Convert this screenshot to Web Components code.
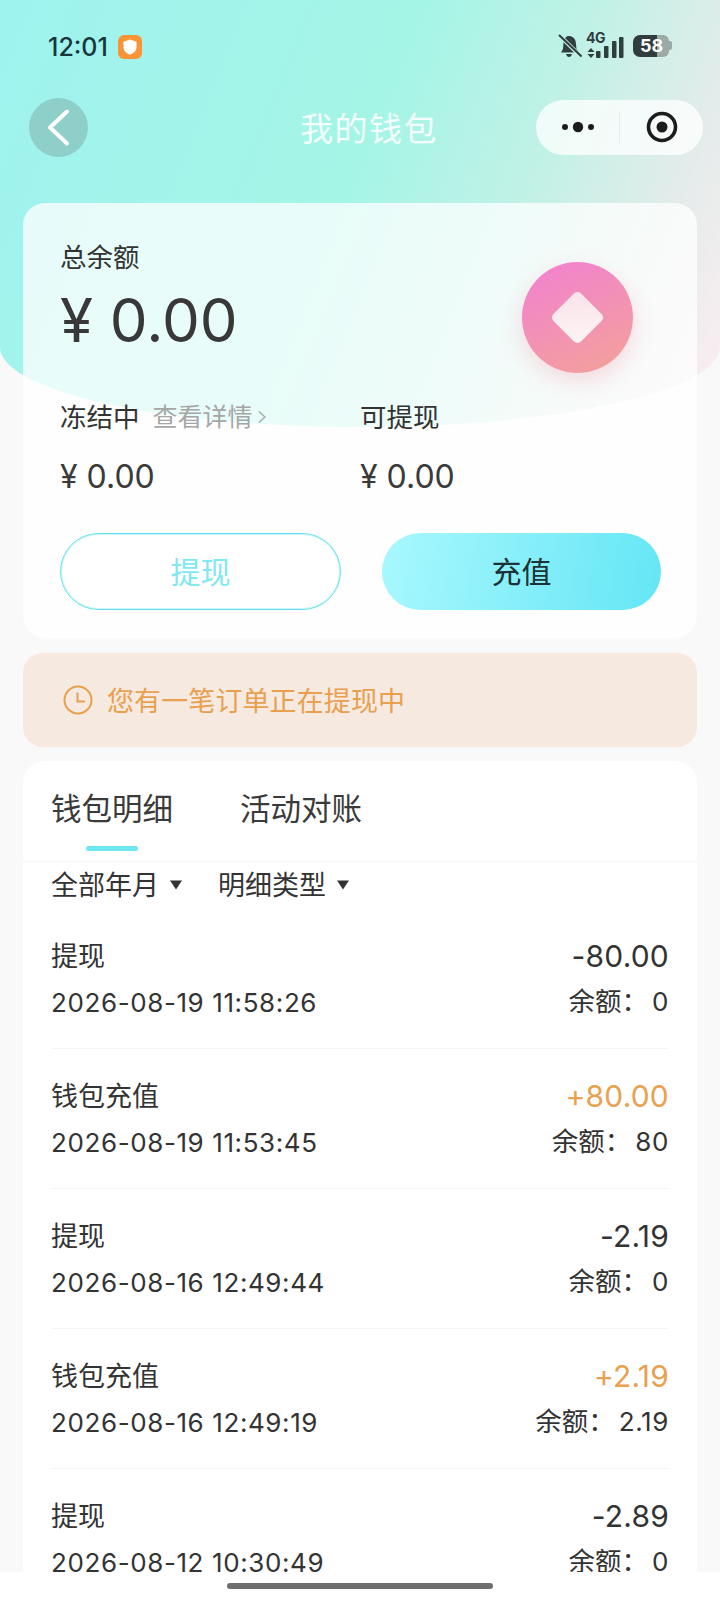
<!DOCTYPE html>
<html lang="zh">
<head>
<meta charset="utf-8">
<title>我的钱包</title>
<style>
  html, body { margin: 0; padding: 0; height: 1600px; overflow: hidden; background: #f9f9f9; }
  body { font-family: Inter, "Noto Sans CJK SC", sans-serif; color: #333; }
</style>
</head>
<body>
<wallet-page>
  <status-bar></status-bar>
  <nav-bar title-text="我的钱包"></nav-bar>
  <balance-card></balance-card>
  <notice-bar>您有一笔订单正在提现中</notice-bar>
  <ledger-panel>
    <ledger-row kind="提现" date="2026-08-19 11:58:26" amount="-80.00" rest="0"></ledger-row>
    <ledger-row kind="钱包充值" date="2026-08-19 11:53:45" amount="+80.00" rest="80"></ledger-row>
    <ledger-row kind="提现" date="2026-08-16 12:49:44" amount="-2.19" rest="0"></ledger-row>
    <ledger-row kind="钱包充值" date="2026-08-16 12:49:19" amount="+2.19" rest="2.19"></ledger-row>
    <ledger-row kind="提现" date="2026-08-12 10:30:49" amount="-2.89" rest="0"></ledger-row>
  </ledger-panel>
</wallet-page>

<script>
// Contenedor de la pagina: fondo degradado, contenido y barra inferior
class WalletPage extends HTMLElement {
  constructor() {
    super();
    this.attachShadow({ mode: 'open' });
  }
  connectedCallback() {
    this.shadowRoot.innerHTML = `
      <style>
        :host { display: flex; flex-direction: column; width: 720px; height: 1600px; position: relative; overflow: hidden; }
        .band {
          position: absolute; left: 0; top: 0; width: 720px; height: 427px;
          border-radius: 0 0 50% 50% / 0 0 80px 80px;
          background: linear-gradient(112deg, #9ff3ef 0%, #a5f5e6 48%, #c2f1e6 68%, #e2ecea 84%, #feedf2 100%);
        }
        .content { position: relative; flex: 1; min-height: 0; overflow: hidden; }
        .home { height: 28px; background: #fff; display: flex; justify-content: center; padding-top: 11px; box-sizing: border-box; position: relative; }
        .home i { display: block; width: 266px; height: 6px; border-radius: 3px; background: #6e6e6e; }
      </style>
      <div class="band"></div>
      <div class="content"><slot></slot></div>
      <div class="home"><i></i></div>`;
  }
}
customElements.define('wallet-page', WalletPage);

// Barra de estado del telefono
class StatusBar extends HTMLElement {
  constructor() {
    super();
    this.attachShadow({ mode: 'open' });
  }
  connectedCallback() {
    this.shadowRoot.innerHTML = `
      <style>
        :host { display: flex; align-items: center; justify-content: space-between; height: 92px; padding: 0 47px 0 48px; box-sizing: border-box; color: #17373c; }
        .left, .right { display: flex; align-items: center; }
        .left { margin-top: 1px; }
        .time { font: 500 25px/30px Inter, sans-serif; width: 70px; }
        .right { margin-top: -1px; }
        svg { display: block; }
        .net { position: relative; width: 38px; height: 24px; margin-left: 4px; }
        .net b { position: absolute; left: 0; top: -4px; font: 700 14px/16px Inter, sans-serif; letter-spacing: -.5px; color: #2c3e40; }
        .net svg { position: absolute; left: 0; top: 0; }
        .batt { position: relative; display: flex; width: 40px; height: 22px; margin-left: 9px; }
        .batt .a { width: 24px; background: #303d3c; border-radius: 7px 0 0 7px; }
        .batt .b { width: 12px; background: #9aaaa6; border-radius: 0 6px 6px 0; }
        .batt .c { width: 3px; height: 9px; margin-top: 6px; background: #9aaaa6; border-radius: 0 2px 2px 0; }
        .batt span { position: absolute; left: 0; width: 37px; top: 0; text-align: center; font: 700 18px/22px Inter, sans-serif; color: #fff; }
      </style>
      <div class="left">
        <span class="time">12:01</span>
        <svg width="24" height="24" viewBox="0 0 24 24">
          <rect width="24" height="24" rx="6" fill="#fb9436"/>
          <path d="M12 4.500l6.500 2.200v5.600c0 3.800-3 6-6.500 7.400-3.500-1.400-6.500-3.600-6.500-7.400V6.700z" fill="#fff"/>
        </svg>
      </div>
      <div class="right">
        <svg width="24" height="25" viewBox="0 0 24 25" fill="#2f3f40">
          <path d="M11 3c4 0 6.500 3 6.800 6.500l.7 6.500 2.500 3.500H3l2-3.500.6-7.500C6 5.500 8 3 11 3z"/>
          <path d="M8 21h6c-.5 2-1.500 3-3 3s-2.500-1-3-3z"/>
          <path d="M1.500 2.500l21.500 21" stroke="#c6efe7" stroke-width="4"/>
          <path d="M1 2l22.500 21.500" stroke="#2f3f40" stroke-width="2"/>
        </svg>
        <div class="net">
          <b>4G</b>
          <svg width="38" height="24" viewBox="0 0 38 24" fill="#2f3f40">
            <path d="M5 14l3.500 4h-7zM5 24l-3.500-4h7z"/>
            <rect x="10" y="17" width="4.500" height="7" rx="1"/>
            <rect x="18" y="12" width="4.500" height="12" rx="1"/>
            <rect x="26" y="7" width="4.500" height="17" rx="1"/>
            <rect x="33" y="3" width="4.500" height="21" rx="1"/>
          </svg>
        </div>
        <div class="batt"><i class="a"></i><i class="b"></i><i class="c"></i><span>58</span></div>
      </div>`;
  }
}
customElements.define('status-bar', StatusBar);

// Barra de navegacion con boton atras, titulo y capsula
class NavBar extends HTMLElement {
  constructor() {
    super();
    this.attachShadow({ mode: 'open' });
  }
  connectedCallback() {
    this.shadowRoot.innerHTML = `
      <style>
        :host { display: flex; align-items: center; justify-content: space-between; height: 70px; padding: 0 17px 0 29px; box-sizing: border-box; position: relative; }
        .back { width: 59px; height: 59px; border-radius: 50%; background: #8fcfc9; display: flex; align-items: center; justify-content: center; }
        h1 { position: absolute; left: 18px; right: 0; top: 0; margin: 0; text-align: center; font: 400 33px/70px "Noto Sans CJK SC", sans-serif; letter-spacing: 1.500px; color: rgba(255,255,255,.9); }
        .capsule { position: relative; width: 167px; height: 55px; border-radius: 28px; background: rgba(255,255,255,.76); display: flex; align-items: center; }
        .capsule > div { flex: 1; display: flex; justify-content: center; align-items: center; }
        .capsule .sep { flex: none; width: 1px; height: 31px; background: rgba(0,0,0,.06); }
      </style>
      <div class="back">
        <svg width="59" height="59" viewBox="0 0 59 59" fill="none"><path d="M38 13.500L21 29.500L38 45.500" stroke="#fff" stroke-width="4" stroke-linecap="round" stroke-linejoin="round"/></svg>
      </div>
      <h1>${this.getAttribute('title-text')}</h1>
      <div class="capsule">
        <div>
          <svg width="34" height="12" viewBox="0 0 34 12" fill="#1c1c1c"><circle cx="4" cy="6" r="3"/><circle cx="17" cy="6" r="5.200"/><circle cx="30" cy="6" r="3"/></svg>
        </div>
        <i class="sep"></i>
        <div>
          <svg width="32" height="32" viewBox="0 0 32 32" fill="none"><circle cx="16" cy="16" r="13.500" stroke="#1c1c1c" stroke-width="3.600"/><circle cx="16" cy="16" r="5.500" fill="#1c1c1c"/></svg>
        </div>
      </div>`;
  }
}
customElements.define('nav-bar', NavBar);

// Tarjeta principal con los saldos y los botones
class BalanceCard extends HTMLElement {
  constructor() {
    super();
    this.attachShadow({ mode: 'open' });
  }
  connectedCallback() {
    this.shadowRoot.innerHTML = `
      <style>
        :host { display: block; margin: 41px 23px 0 23px; height: 435px; box-sizing: border-box; padding: 35px 36px 0 37px; border-radius: 22px; background: rgba(255,255,255,.75); font-family: Inter, "Noto Sans CJK SC", sans-serif; color: #333; }
        .top { display: flex; justify-content: space-between; height: 117px; }
        .label { font-size: 26.500px; line-height: 38px; color: #333; }
        .total { font-size: 60px; line-height: 70px; margin-top: 9px; color: #383838; white-space: pre; }
        .coin { width: 111px; height: 111px; border-radius: 50%; margin: 24px 28px 0 0; background: linear-gradient(155deg, #f280d2 0%, #f3a298 100%); box-shadow: 0 8px 22px rgba(240,130,150,.28); display: flex; align-items: center; justify-content: center; }
        .coin i { display: block; width: 39px; height: 39px; border-radius: 5px; transform: rotate(45deg); background: linear-gradient(135deg, #f8e2e9, #fdf4f4); }
        .grid { display: grid; grid-template-columns: 300px 1fr; margin-top: 43px; }
        .more { font-size: 25px; line-height: 38px; color: #a6a6a6; margin-left: 13px; }
        .head { display: flex; align-items: center; }
        .head svg { margin-left: 5px; }
        .val { font-size: 32px; line-height: 40px; margin-top: 21px; color: #3a3a3a; white-space: pre; }
        .btns { display: grid; grid-template-columns: 281px 279px; column-gap: 41px; margin-top: 36px; }
        .btn { height: 77px; box-sizing: border-box; border-radius: 39px; text-align: center; font: 400 30px/72px "Noto Sans CJK SC", sans-serif; }
        .out { border: 1px solid #62dfec; box-shadow: inset 0 0 0 1px rgba(122,230,240,.4); color: #7fe8f2; background: #fff; }
        .in { background: linear-gradient(100deg, #a9f8fe 0%, #64e6f5 100%); color: #1d3236; line-height: 74px; }
      </style>
      <div class="top">
        <div>
          <div class="label">总余额</div>
          <div class="total">¥ 0.00</div>
        </div>
        <div class="coin"><i></i></div>
      </div>
      <div class="grid">
        <div class="head">
          <span class="label">冻结中</span><span class="more">查看详情</span>
          <svg width="8" height="14" viewBox="0 0 8 14" fill="none"><path d="M1 1.500L7 7l-6 5.500" stroke="#a6a6a6" stroke-width="1.300"/></svg>
        </div>
        <div class="head"><span class="label">可提现</span></div>
        <div class="val">¥ 0.00</div>
        <div class="val">¥ 0.00</div>
      </div>
      <div class="btns">
        <div class="btn out">提现</div>
        <div class="btn in">充值</div>
      </div>`;
  }
}
customElements.define('balance-card', BalanceCard);

// Aviso naranja, el texto llega por el slot
class NoticeBar extends HTMLElement {
  constructor() {
    super();
    this.attachShadow({ mode: 'open' });
  }
  connectedCallback() {
    this.shadowRoot.innerHTML = `
      <style>
        :host { display: flex; align-items: center; margin: 15px 23px 0 23px; height: 94px; box-sizing: border-box; padding-left: 40px; border-radius: 20px; background: #f5e9e0; color: #e8a04f; font: 400 27px/38px "Noto Sans CJK SC", sans-serif; letter-spacing: .1px; }
        svg { margin-right: 14px; }
      </style>
      <svg width="30" height="30" viewBox="0 0 30 30" fill="none" stroke="#e8a04f" stroke-width="2"><circle cx="15" cy="15" r="13.500"/><path d="M14.500 7.500V16.500H22"/></svg>
      <slot></slot>`;
  }
}
customElements.define('notice-bar', NoticeBar);

// Panel de movimientos con pestanas y filtros
class LedgerPanel extends HTMLElement {
  constructor() {
    super();
    this.attachShadow({ mode: 'open' });
  }
  connectedCallback() {
    this.shadowRoot.innerHTML = `
      <style>
        :host { display: block; margin: 14px 23px 0 23px; background: #fff; border-radius: 22px 22px 0 0; font-family: "Noto Sans CJK SC", sans-serif; color: #333; }
        .tabs { display: flex; gap: 67px; height: 101px; padding: 24px 28px 0 28px; box-sizing: border-box; border-bottom: 1px solid #f6f6f6; font-size: 30.500px; line-height: 44px; color: #3a3a3a; }
        .tab { width: 122px; }
        .tab i { display: block; width: 52px; height: 5px; border-radius: 2.500px; margin: 17px auto 0; background: #6de6f0; }
        .filters { display: flex; align-items: center; height: 42px; padding-left: 28px; font-size: 27px; color: #333; }
        .filters svg { margin: 3px 36px 0 11px; }
        .list { padding: 5px 28px 0 28px; }
      </style>
      <div class="tabs">
        <div class="tab">钱包明细<i></i></div>
        <div class="tab">活动对账</div>
      </div>
      <div class="filters">
        <span>全部年月</span>
        <svg width="12" height="10" viewBox="0 0 12 10" fill="#333"><path d="M0 .5h12L6 9.500z"/></svg>
        <span>明细类型</span>
        <svg width="12" height="10" viewBox="0 0 12 10" fill="#333"><path d="M0 .5h12L6 9.500z"/></svg>
      </div>
      <div class="list"><slot></slot></div>`;
  }
}
customElements.define('ledger-panel', LedgerPanel);

// Una fila de movimiento
class LedgerRow extends HTMLElement {
  constructor() {
    super();
    this.attachShadow({ mode: 'open' });
  }
  static get observedAttributes() {
    return ['kind', 'date', 'amount', 'rest'];
  }
  attributeChangedCallback() {
    if (this.isConnected) this.render();
  }
  render() {
    const amount = this.getAttribute('amount') || '';
    const plus = amount.charAt(0) === '+';
    this.shadowRoot.innerHTML = `
      <style>
        :host { display: flex; justify-content: space-between; height: 140px; box-sizing: border-box; padding-top: 29px; border-bottom: 1px solid #f5f5f5; font-family: Inter, "Noto Sans CJK SC", sans-serif; color: #333; }
        .kind { font-size: 27px; line-height: 38px; }
        .date { font-size: 26px; line-height: 40px; margin-top: 7px; letter-spacing: .6px; }
        .right { text-align: right; margin-top: -1px; }
        .amount { font-size: 30px; line-height: 38px; letter-spacing: .2px; }
        .amount.plus { color: #e9a04f; }
        .rest { font-size: 26.500px; line-height: 40px; margin-top: 6px; }
        .rest b { font-weight: 400; font-size: 26px; margin-left: 4px; letter-spacing: .6px; }
      </style>
      <div>
        <div class="kind">${this.getAttribute('kind')}</div>
        <div class="date">${this.getAttribute('date')}</div>
      </div>
      <div class="right">
        <div class="amount ${plus ? 'plus' : ''}">${amount}</div>
        <div class="rest">余额：<b>${this.getAttribute('rest')}</b></div>
      </div>`;
  }
  connectedCallback() {
    this.render();
  }
}
customElements.define('ledger-row', LedgerRow);
</script>
</body>
</html>
